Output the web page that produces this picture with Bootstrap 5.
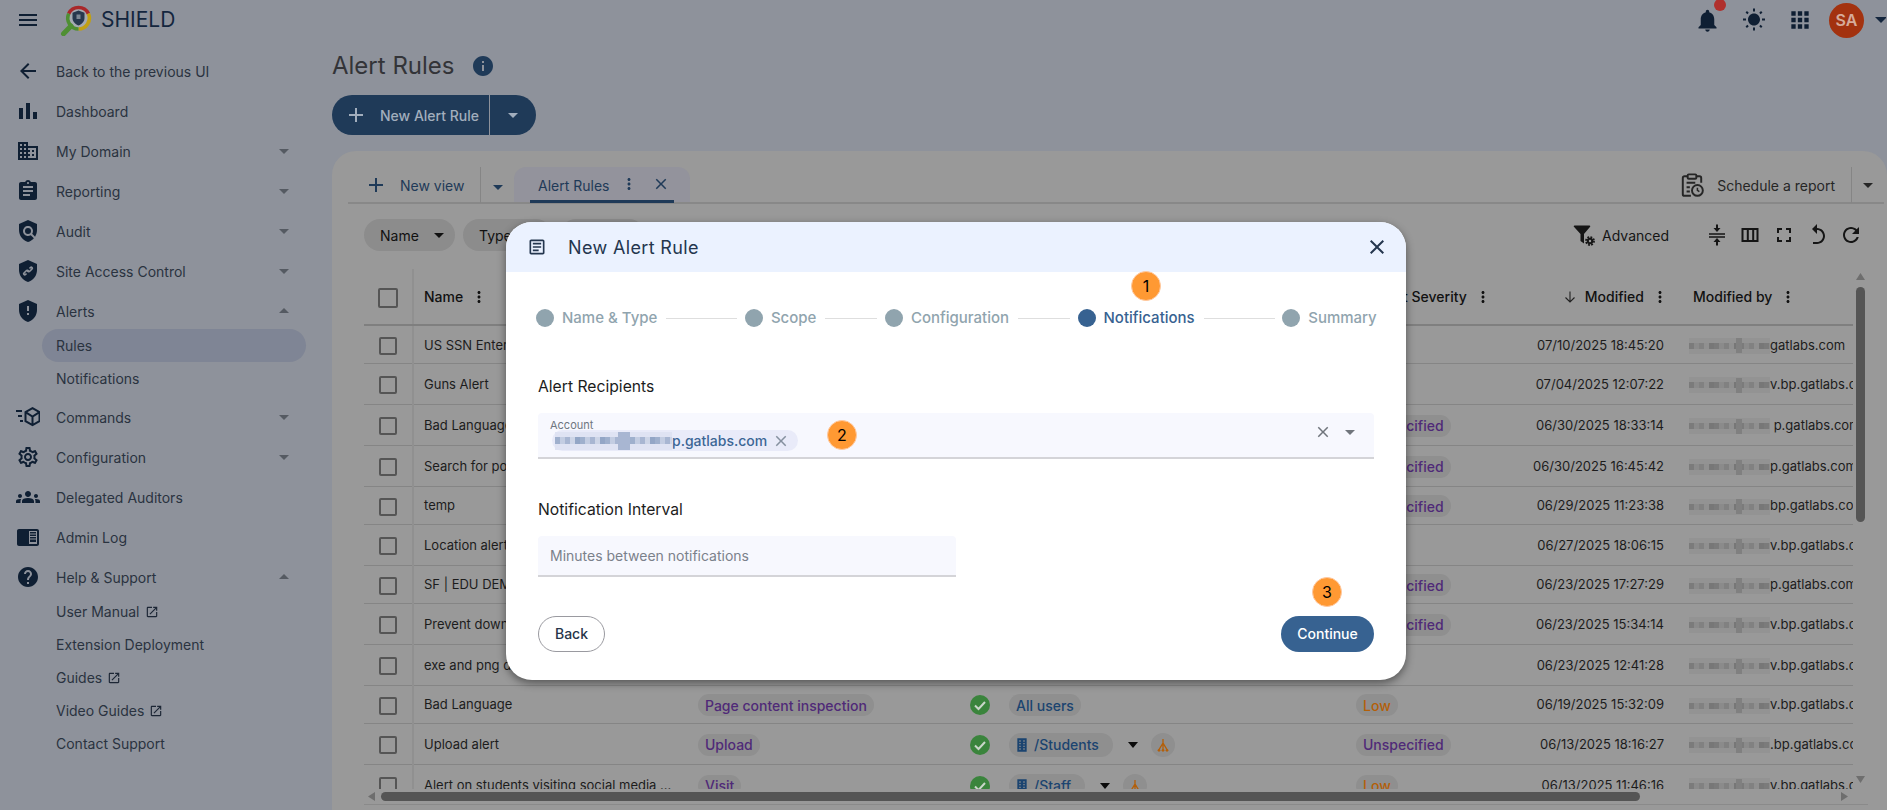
<!DOCTYPE html>
<html lang="en">
<head>
<meta charset="utf-8">
<title>SHIELD - Alert Rules</title>
<link href="https://cdn.jsdelivr.net/npm/bootstrap@5.3.0/dist/css/bootstrap.min.css" rel="stylesheet">
<style>
html,body{height:810px;overflow:hidden}
body{background:#8e929b;font-family:Inter,"Liberation Sans",sans-serif;font-size:14px;color:#2a3340;position:relative}
svg{display:block;flex:none;fill:currentColor}
.topbar{height:48px;padding-bottom:8px}
.burger{width:24px;height:24px;margin-left:16px;color:#0f1f33}
.logo-mark{margin-left:20px}
.brand-name{font-size:21px;margin-left:9px;color:#14263e}
.topicons{color:#0f1f33}
.bell-wrap{position:relative;margin-right:21px}
.red-dot{position:absolute;top:-8px;right:-5px;width:12px;height:12px;border-radius:50%;background:#b0302d}
.sun-i{margin-right:21px}
.apps-i{margin-right:16px}
.ava{width:35px;height:35px;border-radius:50%;background:#a3320f;color:#d6ab9a;font-weight:600;font-size:16px}
.ava-caret{width:13px;overflow:hidden;color:#14263e;margin-left:9px;margin-right:1px}
.sidebar{width:332px;flex:none;padding-top:3px}
.side-link{height:40px;padding-left:16px;color:#2a3340}
.side-ic{width:24px;height:24px;color:#0f1f33;margin-right:16px;flex:none}
.side-caret{margin-left:auto;color:#555a62}
.side-link .side-caret{margin-right:36px}
.sublist{margin-top:-2px;margin-bottom:2px}
.sublist-b{margin-top:-2px;margin-bottom:0}
.sub-link{height:33px;margin-left:42px;width:264px;padding-left:14px;border-radius:17px;color:#2a3340}
.sub-on{background:#7f8595}
.ext-i{width:14px;height:14px;margin-left:5px;color:#1c2635}
.mainarea{flex:1;min-width:0}
.page-head{height:36px}
.page-title{font-size:24px;font-weight:400;margin:0;color:#333438;line-height:36px}
.info-i{width:24px;height:24px;color:#1f3a58;margin-left:17px}
.split-primary{margin-top:11px;width:204px;height:40px;border-radius:20px;background:#1f3a58;color:#a2aebd;font-weight:500;overflow:hidden}
.split-main{width:157px;height:40px;padding-left:12px}
.split-main svg{margin-right:12px}
.split-div{width:1px;height:40px;background:#8e929b;flex:none}
.split-more{flex:1}
.panel-main{background:#999;margin-top:16px;height:659px;border-radius:24px 24px 0 0;padding:16px 3px 0 16px;position:relative}
.tabline{height:37px;border-bottom:2px solid #888}
.newview{color:#1f3a58;width:133px;height:36px;border-right:1px solid #858585;padding-left:16px}
.newview svg{margin-right:12px}
.more-caret{width:33px;color:#1f3a58}
.tab-item{width:176px;height:35px;background:#93939c;border-radius:12px 12px 0 0;padding:0 16px;position:relative;color:#1f3a58}
.tab-inner{width:144px;height:36px;padding:3px 0 0 8px;border-bottom:3px solid #1f3a58;margin-bottom:-1px}
.tab-kebab{margin-left:11px;margin-top:-3px}
.tab-x{margin-left:14px;margin-top:-3px}
.sched{color:#262626;height:36px}
.sched-sep{width:1px;height:36px;background:#858585;margin-left:16px}
.sched-caret{width:32px;color:#262626}
.filterline{height:32px;margin-top:15px;padding-left:16px;padding-right:21px}
.fchip{height:32px;border-radius:16px;background:#8c8c8c;color:#111;padding-left:16px;margin-right:8px}
.fchip-a{width:91px}
.fchip-b{width:89px}
.fchip-c{width:85px}
.fchip svg{margin-left:8px}
.adv{color:#151515;margin-right:26px}
.adv svg{margin-right:6px}
.tool-i{color:#151515;margin-left:9.6px}
.gridbox{position:relative;margin:18px 0 0 16px;width:1504px;height:520px;overflow:hidden}
.gridscroll{width:1489px;height:520px;overflow:hidden}
.table.rules-grid{--bs-table-bg:transparent;--bs-table-color:#1c1c1c;table-layout:fixed;width:1489px;margin:0;border-collapse:collapse}
.rules-grid th,.rules-grid td{padding:0;border-bottom:1px solid #858585;vertical-align:middle;white-space:nowrap;overflow:hidden;font-size:13px}
.rules-grid tbody td{padding-top:2px}
.rules-grid thead th{height:56px;border-bottom:2px solid #7f7f7f;font-weight:500;color:#111;font-size:14px}
.rules-grid .r38 td{height:38px}
.rules-grid .r41 td{height:41px}
.c-chk{width:49px;text-align:center;border-right:2px solid #909090}
.c-name{width:277px;padding-left:10px!important}
.c-type{width:275px;padding-left:8px!important}
.c-act{width:35px;padding-left:5px!important}
.c-scope{width:350px;padding-left:9px!important}
.c-sev{width:180px;padding-left:6px!important}
.c-mod{width:145px;padding-right:11px!important;text-align:right}
.rules-grid thead th.c-mod{padding-right:6px!important}
.c-by{width:178px;padding-left:14px!important}
.th-in{height:20px}
.th-kebab{width:18px;height:18px;margin-left:7px}
.sort-i{margin-right:8px;color:#222}
.chk-box.form-check-input{width:18px;height:18px;margin:0;background-color:transparent;border:2px solid #555;border-radius:2px;vertical-align:middle}
thead .chk-box.form-check-input{width:20px;height:20px}
.tagchip{display:inline-flex;align-items:center;height:22px;border-radius:11px;background:#8f8f8f;padding:0 7px;font-size:14px;font-weight:500}
.t-purple{color:#4f2a78}
.t-blue{color:#1b4470}
.t-orange{color:#b45f08;background:#8f8f8f}
.scopechip{height:24px;border-radius:12px;padding:0 14px 0 5px}
.scopechip svg{margin-right:4px}
.hier{width:24px;height:24px;padding:0;justify-content:center;color:#b45f08;border-radius:12px}
.tri{color:#0b0b0b;margin:0 12px 0 14px}
.stat-ok{width:20px;height:20px}
.pxl{display:inline-block;width:81px;height:16px;vertical-align:middle;background:linear-gradient(#808080,#808080) 62% center/6px 15px no-repeat,repeating-linear-gradient(90deg,#7b7b7b 0 5px,#8b8b8b 5px 10px,#818181 10px 15px,#909090 15px 20px,#777 20px 25px) center/100% 6px no-repeat,#939393;filter:blur(.7px)}
.v-thumb{position:absolute;left:1492px;top:18px;width:9px;height:235px;border-radius:5px;background:#555}
.v-up{position:absolute;left:1492px;top:3px;color:#6e6e6e}
.v-down{position:absolute;left:1492px;top:507px;color:#6e6e6e}
.h-bar{position:relative;height:16px;width:1504px;margin-left:16px;border-bottom:1px solid #8a8a8a}
.h-thumb{position:absolute;left:17px;top:3px;width:1259px;height:9px;border-radius:5px;background:#555}
.h-l{position:absolute;left:3px;top:3px;color:#6e6e6e}
.h-r{position:absolute;left:1477px;top:3px;color:#6e6e6e}
.wizard.modal-content{position:absolute;left:506px;top:222px;width:900px;height:458px;border:0;border-radius:26px;background:#fff;box-shadow:0 3px 8px rgba(0,0,0,.45);overflow:hidden;color:#26354a}
.wizard .modal-header{height:50px;background:#ebf2ff;border:0;padding:0 17px 0 21px;border-radius:0}
.wizard .modal-title{font-size:18px;font-weight:400;color:#24364e;margin-left:21px;letter-spacing:.35px}
.wiz-ic{width:20px;height:20px;color:#24364e}
.wiz-x{width:24px;height:24px;margin-left:auto;color:#24364e}
.wiz-body{padding:34px 32px 0 32px}
.stepper{height:24px;margin-left:-2px;margin-right:-2px;font-size:15px;font-weight:500;color:#90a4ae;white-space:nowrap}
.dot{width:18px;height:18px;border-radius:50%;background:#90a4ae;margin-right:8px;flex:none}
.step-on{color:#376291}
.step-on .dot{background:#376291}
.ln{height:1px;background:#dedede;margin:0 7.5px 0 9px;flex:none}
.ln-l{width:71px}
.ln-s{width:52px}
.sect{font-size:15.7px;height:24px;line-height:24px;color:#1c1c1c;padding-top:1px}
.s1{margin-top:44px}
.s2{margin-top:38px}
.acct{height:46px;margin-top:15px;background:#f7f8fe;border-bottom:2px solid #d4d4d8;border-radius:4px 4px 0 0;position:relative}
.acct-l{position:absolute;left:12px;top:4px;font-size:11px;color:#6f7680}
.acct-chip{position:absolute;left:14px;top:17px;height:21px;width:246px;border-radius:11px;background:#e9ebf9;color:#3c6695;font-weight:500;padding-left:3px}
.pxl-b{display:inline-block;width:117px;height:18px;background:linear-gradient(#a8b6d2,#a8b6d2) 60% center/12px 18px no-repeat,repeating-linear-gradient(90deg,#9fb0cd 0 5px,#c3cde2 5px 10px,#a8b6d2 10px 15px,#cdd5e7 15px 20px,#93a6c6 20px 25px) center/100% 7px no-repeat,#dfe3f3;filter:blur(.7px);flex:none}
.acct-x{color:#85909f;margin-left:5px}
.acct-ctl{position:absolute;right:12px;top:7px;color:#70757c}
.acct-ctl svg+svg{margin-left:6px}
.mins{display:block;width:418px;height:41px;margin-top:15px;background:#f7f8fe;border:0;border-bottom:2px solid #d4d4d8;border-radius:4px 4px 0 0;padding:0 12px;font-size:14px;color:#333}
.mins.form-control{background:#f7f8fe;font-family:inherit}
.mins::placeholder{color:#7b818b}
.wiz-foot{margin-top:39px}
.btn.wiz-back{width:67px;height:36px;border:1px solid #9a9aa0;color:#26354a;font-size:14px;font-weight:500;padding:0 0 2px;background:#fff}
.btn.wiz-next{width:93px;height:36px;background:#376291;color:#fff;font-size:14px;font-weight:500;border:0;padding:0 0 2px}
.num-b{position:absolute;width:30px;height:30px;border-radius:50%;background:#ff9933;border:1px solid #ffc9a0;color:#000;font-size:16px}
.n1{left:625px;top:49px}
.n2{left:321px;top:198px}
.n3{left:806px;top:355px}
</style>
</head>
<body>

<header class="topbar d-flex align-items-center">
  <svg class="burger" viewBox="0 0 24 24"><path d="M3 18h18v-2H3v2zm0-5h18v-2H3v2zm0-7v2h18V6H3z"/></svg>
  <svg class="logo-mark" width="32" height="32" viewBox="0 0 32 32">
    <circle cx="18.5" cy="14" r="10.500" fill="#a5aab2"/>
    <path d="M8.700 9.600A11 11 0 0 1 28.400 9.600" fill="none" stroke="#a9282a" stroke-width="3.600"/>
    <path d="M28.400 9.600A11 11 0 0 1 18.500 25" fill="none" stroke="#c2a012" stroke-width="3.600"/>
    <path d="M18.500 25A11 11 0 0 1 8.700 9.600" fill="none" stroke="#4f8f33" stroke-width="3.600"/>
    <path d="M11 22L3.500 29.800" fill="none" stroke="#4f8f33" stroke-width="5" stroke-linecap="round"/>
    <path d="M18.500 6.500l6 2.200v5c0 3.800-2.600 6.600-6 7.800-3.400-1.200-6-4-6-7.800v-5z" fill="#27384e"/>
    <path d="M16.500 10.500h4V15h-4z" fill="#7c8794"/>
  </svg>
  <span class="brand-name">SHIELD</span>
  <div class="topicons ms-auto d-flex align-items-center">
    <div class="bell-wrap"><svg width="27" height="27" viewBox="0 0 24 24"><path d="M12 22c1.100 0 2-.9 2-2h-4c0 1.100.89 2 2 2zm6-6v-5c0-3.070-1.640-5.640-4.500-6.320V4c0-.83-.67-1.500-1.500-1.500s-1.500.67-1.500 1.500v.68C7.630 5.360 6 7.920 6 11v5l-2 2v1h16v-1l-2-2z"/></svg><span class="red-dot"></span></div>
    <svg class="sun-i" width="24" height="24" viewBox="0 0 24 24"><path d="M6.760 4.840l-1.800-1.790-1.410 1.410 1.790 1.790 1.420-1.410zM4 10.500H1v2h3v-2zm9-9.950h-2V3.500h2V.55zm7.450 3.910l-1.410-1.410-1.790 1.790 1.410 1.410 1.790-1.790zm-3.210 13.700l1.790 1.800 1.410-1.410-1.800-1.790-1.400 1.400zM20 10.500v2h3v-2h-3zm-8-5c-3.310 0-6 2.690-6 6s2.690 6 6 6 6-2.690 6-6-2.690-6-6-6zm-1 16.950h2V19.500h-2v2.950zm-7.450-3.910l1.410 1.410 1.790-1.800-1.410-1.410-1.790 1.800z"/></svg>
    <svg class="apps-i" width="26" height="26" viewBox="0 0 24 24"><path d="M4 8h4V4H4v4zm6 12h4v-4h-4v4zm-6 0h4v-4H4v4zm0-6h4v-4H4v4zm6 0h4v-4h-4v4zm6-10v4h4V4h-4zm-6 4h4V4h-4v4zm6 6h4v-4h-4v4zm0 6h4v-4h-4v4z"/></svg>
    <div class="ava d-flex align-items-center justify-content-center">SA</div>
    <div class="ava-caret"><svg width="24" height="24" viewBox="0 0 24 24"><path d="M2 9l6 6 6-6z"/></svg></div>
  </div>
</header>

<div class="d-flex">
  <nav class="sidebar nav flex-column flex-nowrap">
    <a class="side-link text-decoration-none d-flex align-items-center"><svg class="side-ic" viewBox="0 0 24 24"><path d="M20 11H7.830l5.590-5.590L12 4l-8 8 8 8 1.410-1.410L7.830 13H20v-2z"/></svg>Back to the previous UI</a>
    <a class="side-link text-decoration-none d-flex align-items-center"><svg class="side-ic" viewBox="0 0 24 24"><path d="M3 9h4v11H3zm14 4h4v7h-4zM10 4h4v16h-4z"/></svg>Dashboard</a>
    <a class="side-link text-decoration-none d-flex align-items-center"><svg class="side-ic" viewBox="0 0 24 24"><path d="M12 7V3H2v18h20V7H12zM6 19H4v-2h2v2zm0-4H4v-2h2v2zm0-4H4V9h2v2zm0-4H4V5h2v2zm4 12H8v-2h2v2zm0-4H8v-2h2v2zm0-4H8V9h2v2zm0-4H8V5h2v2zm10 12h-8v-2h2v-2h-2v-2h2v-2h-2V9h8v10zm-2-8h-2v2h2v-2zm0 4h-2v2h2v-2z"/></svg>My Domain<svg class="side-caret" width="24" height="24" viewBox="0 0 24 24"><path d="M7 10l5 5 5-5z"/></svg></a>
    <a class="side-link text-decoration-none d-flex align-items-center"><svg class="side-ic" viewBox="0 0 24 24"><path d="M19 3h-4.180C14.400 1.840 13.300 1 12 1c-1.300 0-2.400.84-2.820 2H5c-1.100 0-2 .9-2 2v14c0 1.100.9 2 2 2h14c1.100 0 2-.9 2-2V5c0-1.100-.9-2-2-2zm-7 0c.55 0 1 .45 1 1s-.45 1-1 1-1-.45-1-1 .45-1 1-1zm2 14H7v-2h7v2zm3-4H7v-2h10v2zm0-4H7V7h10v2z"/></svg>Reporting<svg class="side-caret" width="24" height="24" viewBox="0 0 24 24"><path d="M7 10l5 5 5-5z"/></svg></a>
    <a class="side-link text-decoration-none d-flex align-items-center"><svg class="side-ic" viewBox="0 0 24 24"><path d="M21 5l-9-4-9 4v6c0 5.550 3.840 10.740 9 12 2.300-.56 4.330-1.900 5.880-3.710l-3.120-3.120c-1.940 1.290-4.580 1.070-6.290-.64-1.950-1.950-1.950-5.120 0-7.070 1.950-1.950 5.120-1.950 7.070 0 1.710 1.710 1.920 4.350.64 6.290l2.900 2.900C20.290 15.690 21 13.380 21 11V5z"/><circle cx="12" cy="12" r="3"/></svg>Audit<svg class="side-caret" width="24" height="24" viewBox="0 0 24 24"><path d="M7 10l5 5 5-5z"/></svg></a>
    <a class="side-link text-decoration-none d-flex align-items-center"><svg class="side-ic" viewBox="0 0 24 24"><path d="M12 1L3 5v6c0 5.550 3.840 10.740 9 12 5.160-1.260 9-6.450 9-12V5l-9-4z"/><path d="M10.500 14.500l-1 1c-1 1-2.500-.5-1.500-1.500l2-2c1-1 2.300-.6 2.600.2M13.500 9.500l1-1c1-1 2.500.5 1.500 1.500l-2 2c-1 1-2.300.6-2.600-.2" fill="none" stroke="#8e929b" stroke-width="1.700"/></svg>Site Access Control<svg class="side-caret" width="24" height="24" viewBox="0 0 24 24"><path d="M7 10l5 5 5-5z"/></svg></a>
    <a class="side-link text-decoration-none d-flex align-items-center"><svg class="side-ic" viewBox="0 0 24 24"><path d="M12 1L3 5v6c0 5.550 3.840 10.740 9 12 5.160-1.260 9-6.450 9-12V5l-9-4z M13 16h-2v-2h2V16z M13 12h-2V7h2V12z" fill-rule="evenodd"/></svg>Alerts<svg class="side-caret" width="24" height="24" viewBox="0 0 24 24"><path d="M7 14l5-5 5 5z"/></svg></a>
    <div class="sublist">
      <a class="sub-link text-decoration-none sub-on d-flex align-items-center">Rules</a>
      <a class="sub-link text-decoration-none d-flex align-items-center">Notifications</a>
    </div>
    <a class="side-link text-decoration-none d-flex align-items-center"><svg class="side-ic" viewBox="0 0 24 24" fill="none"><path d="M0 6h6M2 11h4M4 16h3" fill="none" stroke="currentColor" stroke-width="2"/><path d="M16.500 3.200l7 4v9l-7 4-7-4v-9zM9.500 7.200l7 4.300 7-4.300M16.500 11.500v9" fill="none" stroke="currentColor" stroke-width="2"/></svg>Commands<svg class="side-caret" width="24" height="24" viewBox="0 0 24 24"><path d="M7 10l5 5 5-5z"/></svg></a>
    <a class="side-link text-decoration-none d-flex align-items-center"><svg class="side-ic" viewBox="0 0 24 24"><path d="M19.430 12.980c.04-.32.07-.64.07-.98 0-.34-.03-.66-.07-.98l2.110-1.650c.19-.15.24-.42.12-.64l-2-3.460c-.09-.16-.26-.25-.44-.25-.06 0-.12.01-.17.03l-2.490 1c-.52-.4-1.080-.73-1.690-.98l-.38-2.650C14.460 2.180 14.250 2 14 2h-4c-.25 0-.46.18-.49.42l-.38 2.650c-.61.25-1.170.59-1.690.98l-2.490-1c-.06-.02-.12-.03-.18-.03-.17 0-.34.09-.43.25l-2 3.460c-.13.22-.07.49.12.64l2.110 1.650c-.04.32-.07.65-.07.98 0 .33.03.66.07.98l-2.110 1.650c-.19.15-.24.42-.12.64l2 3.460c.09.16.26.25.44.25.06 0 .12-.01.17-.03l2.490-1c.52.4 1.080.73 1.690.98l.38 2.650c.03.24.24.42.49.42h4c.25 0 .46-.18.49-.42l.38-2.650c.61-.25 1.170-.59 1.690-.98l2.490 1c.06.02.12.03.18.03.17 0 .34-.09.43-.25l2-3.460c.12-.22.07-.49-.12-.64l-2.110-1.650zm-1.980-1.710c.04.31.05.52.05.73 0 .21-.02.43-.05.73l-.14 1.130.89.7 1.080.84-.7 1.210-1.270-.51-1.040-.42-.9.68c-.43.32-.84.56-1.250.73l-1.060.43-.16 1.130-.2 1.350h-1.400l-.19-1.350-.16-1.130-1.060-.43c-.43-.18-.83-.41-1.230-.71l-.91-.7-1.060.43-1.270.51-.7-1.210 1.080-.84.89-.7-.14-1.130c-.03-.31-.05-.54-.05-.74s.02-.43.05-.73l.14-1.130-.89-.7-1.080-.84.7-1.210 1.270.51 1.040.42.9-.68c.43-.32.84-.56 1.250-.73l1.060-.43.16-1.130.2-1.350h1.390l.19 1.350.16 1.130 1.060.43c.43.18.83.41 1.230.71l.91.7 1.060-.43 1.270-.51.7 1.210-1.070.85-.89.7.14 1.130zM12 8c-2.210 0-4 1.790-4 4s1.790 4 4 4 4-1.790 4-4-1.790-4-4-4zm0 6c-1.100 0-2-.9-2-2s.9-2 2-2 2 .9 2 2-.9 2-2 2z"/></svg>Configuration<svg class="side-caret" width="24" height="24" viewBox="0 0 24 24"><path d="M7 10l5 5 5-5z"/></svg></a>
    <a class="side-link text-decoration-none d-flex align-items-center"><svg class="side-ic" viewBox="0 0 24 24"><path d="M4 13c1.100 0 2-.9 2-2s-.9-2-2-2-2 .9-2 2 .9 2 2 2zm1.130 1.100c-.37-.06-.74-.1-1.130-.1-.99 0-1.930.21-2.780.58C.48 14.900 0 15.620 0 16.430V18h4.500v-1.610c0-.83.23-1.610.63-2.290zM20 13c1.100 0 2-.9 2-2s-.9-2-2-2-2 .9-2 2 .9 2 2 2zm4 3.430c0-.81-.48-1.530-1.220-1.850-.85-.37-1.790-.58-2.780-.58-.39 0-.76.04-1.130.1.4.68.63 1.460.63 2.290V18H24v-1.570zm-7.760-2.650c-1.170-.52-2.610-.9-4.240-.9-1.630 0-3.070.39-4.240.9C6.680 14.130 6 15.210 6 16.390V18h12v-1.610c0-1.180-.68-2.260-1.760-2.610zM12 12c1.660 0 3-1.340 3-3s-1.340-3-3-3-3 1.340-3 3 1.340 3 3 3z"/></svg>Delegated Auditors</a>
    <a class="side-link text-decoration-none d-flex align-items-center"><svg class="side-ic" viewBox="0 0 24 24"><path fill-rule="evenodd" d="M21 4H3c-1.100 0-2 .9-2 2v13c0 1.100.9 2 2 2h18c1.100 0 2-.9 2-2V6c0-1.100-.9-2-2-2zm0 15h-8V6h8v13zm-7-9.500h6V11h-6zm0 2.500h6v1.500h-6zm0-5h6V8.500h-6zm0 7.500h6V17h-6z"/></svg>Admin Log</a>
    <a class="side-link text-decoration-none d-flex align-items-center"><svg class="side-ic" viewBox="0 0 24 24"><path d="M12 2C6.480 2 2 6.480 2 12s4.480 10 10 10 10-4.480 10-10S17.520 2 12 2zm1 17h-2v-2h2v2zm2.070-7.750l-.9.92C13.450 12.900 13 13.500 13 15h-2v-.5c0-1.100.45-2.100 1.170-2.830l1.240-1.260c.37-.36.59-.86.59-1.410 0-1.100-.9-2-2-2s-2 .9-2 2H8c0-2.210 1.790-4 4-4s4 1.790 4 4c0 .88-.36 1.680-.93 2.250z"/></svg>Help &amp; Support<svg class="side-caret" width="24" height="24" viewBox="0 0 24 24"><path d="M7 14l5-5 5 5z"/></svg></a>
    <div class="sublist-b">
      <a class="sub-link text-decoration-none d-flex align-items-center">User Manual<svg class="ext-i" viewBox="0 0 24 24"><path d="M19 19H5V5h7V3H5c-1.110 0-2 .9-2 2v14c0 1.100.89 2 2 2h14c1.100 0 2-.9 2-2v-7h-2v7zM14 3v2h3.590l-9.830 9.830 1.410 1.410L19 6.410V10h2V3h-7z"/></svg></a>
      <a class="sub-link text-decoration-none d-flex align-items-center">Extension Deployment</a>
      <a class="sub-link text-decoration-none d-flex align-items-center">Guides<svg class="ext-i" viewBox="0 0 24 24"><path d="M19 19H5V5h7V3H5c-1.110 0-2 .9-2 2v14c0 1.100.89 2 2 2h14c1.100 0 2-.9 2-2v-7h-2v7zM14 3v2h3.590l-9.830 9.830 1.410 1.410L19 6.410V10h2V3h-7z"/></svg></a>
      <a class="sub-link text-decoration-none d-flex align-items-center">Video Guides<svg class="ext-i" viewBox="0 0 24 24"><path d="M19 19H5V5h7V3H5c-1.110 0-2 .9-2 2v14c0 1.100.89 2 2 2h14c1.100 0 2-.9 2-2v-7h-2v7zM14 3v2h3.590l-9.830 9.830 1.410 1.410L19 6.410V10h2V3h-7z"/></svg></a>
      <a class="sub-link text-decoration-none d-flex align-items-center">Contact Support</a>
    </div>
  </nav>

  <main class="mainarea">
    <div class="page-head d-flex align-items-center">
      <h1 class="page-title">Alert Rules</h1>
      <svg class="info-i" viewBox="0 0 24 24"><path d="M12 2C6.480 2 2 6.480 2 12s4.480 10 10 10 10-4.480 10-10S17.520 2 12 2zm1 15h-2v-6h2v6zm0-8h-2V7h2v2z"/></svg>
    </div>
    <div class="split-primary d-flex align-items-center">
      <div class="split-main d-flex align-items-center"><svg width="24" height="24" viewBox="0 0 24 24"><path d="M19 13h-6v6h-2v-6H5v-2h6V5h2v6h6v2z"/></svg>New Alert Rule</div>
      <span class="split-div"></span>
      <div class="split-more d-flex justify-content-center"><svg width="24" height="24" viewBox="0 0 24 24"><path d="M7 10l5 5 5-5z"/></svg></div>
    </div>

    <section class="panel-main">
      <div class="tabline d-flex align-items-start">
        <div class="newview d-flex align-items-center"><svg width="24" height="24" viewBox="0 0 24 24"><path d="M19 13h-6v6h-2v-6H5v-2h6V5h2v6h6v2z"/></svg>New view</div>
        <div class="more-caret d-flex justify-content-center pt-1 mt-1"><svg width="24" height="24" viewBox="0 0 24 24"><path d="M7 10l5 5 5-5z"/></svg></div>
        <div class="tab-item">
          <div class="tab-inner d-flex align-items-center">Alert Rules
            <svg class="tab-kebab" width="18" height="18" viewBox="0 0 24 24"><path d="M12 8c1.100 0 2-.9 2-2s-.9-2-2-2-2 .9-2 2 .9 2 2 2zm0 2c-1.100 0-2 .9-2 2s.9 2 2 2 2-.9 2-2-.9-2-2-2zm0 6c-1.100 0-2 .9-2 2s.9 2 2 2 2-.9 2-2-.9-2-2-2z"/></svg>
            <svg class="tab-x" width="18" height="18" viewBox="0 0 24 24"><path d="M19 6.410L17.590 5 12 10.590 6.410 5 5 6.410 10.590 12 5 17.590 6.410 19 12 13.410 17.590 19 19 17.590 13.410 12z"/></svg>
          </div>
        </div>
        <div class="sched ms-auto d-flex align-items-center">
          <svg class="me-2" width="26" height="26" viewBox="0 0 24 24" fill="none"><path d="M8 4H5a1.500 1.500 0 0 0-1.500 1.500v15A1.500 1.500 0 0 0 5 22h6M16 4h3a1.500 1.500 0 0 1 1.500 1.500V10" fill="none" stroke="currentColor" stroke-width="1.800"/><rect x="8" y="2.200" width="8" height="4" rx="1" fill="none" stroke="currentColor" stroke-width="1.800"/><path d="M7 10h8M7 14h3M7 18h3" fill="none" stroke="currentColor" stroke-width="1.800"/><circle cx="17" cy="17" r="5" fill="none" stroke="currentColor" stroke-width="1.800"/><path d="M17 14.500V17l1.800 1.200" fill="none" stroke="currentColor" stroke-width="1.400"/></svg>
          <span class="ms-1">Schedule a report</span>
          <span class="sched-sep"></span>
          <div class="sched-caret d-flex justify-content-center"><svg width="24" height="24" viewBox="0 0 24 24"><path d="M7 10l5 5 5-5z"/></svg></div>
        </div>
      </div>

      <div class="filterline d-flex align-items-center">
        <div class="fchip fchip-a d-flex align-items-center">Name<svg width="24" height="24" viewBox="0 0 24 24"><path d="M7 10l5 5 5-5z"/></svg></div>
        <div class="fchip fchip-b d-flex align-items-center">Type</div>
        <div class="fchip fchip-c d-flex align-items-center"></div>
        <div class="adv ms-auto d-flex align-items-center">
          <svg width="24" height="24" viewBox="0 0 24 24"><path d="M2.500 2.500h15c.7 0 1 .8.6 1.300L12 11v9.500l-3.500-2.500v-7L1.900 3.800c-.4-.5-.1-1.300.6-1.300z"/><circle cx="18" cy="18" r="3.200"/><circle cx="18" cy="18" r="4" fill="none" stroke="currentColor" stroke-width="1.800" stroke-dasharray="1.800 1.340"/><circle cx="18" cy="18" r="1.200" fill="#999"/></svg>
          Advanced
        </div>
        <svg class="tool-i" width="24" height="24" viewBox="0 0 24 24"><path d="M4 10.200h16v1.500H4zM4 13.300h16v1.500H4zM13 5h2.500L12 9 8.500 5H11V1.500h2zM11 19H8.500L12 15l3.500 4H13v3.500h-2z"/></svg>
        <svg class="tool-i" width="24" height="24" viewBox="0 0 24 24"><path fill-rule="evenodd" d="M3.500 5v14h17V5zM5.500 7h3.300v10H5.500zM10.800 7h3.400v10h-3.400zM16.200 7h2.300v10h-2.300z"/></svg>
        <svg class="tool-i" width="24" height="24" viewBox="0 0 24 24"><path d="M7 14H5v5h5v-2H7v-3zm-2-4h2V7h3V5H5v5zm12 7h-3v2h5v-5h-2v3zM14 5v2h3v3h2V5h-5z"/></svg>
        <svg class="tool-i" width="24" height="24" viewBox="0 0 24 24"><path d="M12 5V1L7 6l5 5V7c3.310 0 6 2.690 6 6s-2.690 6-6 6H8v2h4c4.420 0 8-3.580 8-8s-3.580-8-8-8z"/></svg>
        <svg class="tool-i" width="24" height="24" viewBox="0 0 24 24"><path d="M17.650 6.350C16.200 4.900 14.210 4 12 4c-4.420 0-7.990 3.580-7.990 8s3.570 8 7.990 8c3.730 0 6.840-2.550 7.730-6h-2.080c-.82 2.330-3.040 4-5.650 4-3.310 0-6-2.690-6-6s2.690-6 6-6c1.660 0 3.140.69 4.220 1.780L13 11h7V4l-2.350 2.350z"/></svg>
      </div>

      <div class="gridbox">
        <div class="gridscroll">
          <table class="table rules-grid">
            <colgroup><col class="c-chk"><col class="c-name"><col class="c-type"><col class="c-act"><col class="c-scope"><col class="c-sev"><col class="c-mod"><col class="c-by"></colgroup>
            <thead>
              <tr>
                <th class="c-chk"><input class="form-check-input chk-box" type="checkbox"></th>
                <th class="c-name"><div class="th-in d-flex align-items-center">Name<svg class="th-kebab" viewBox="0 0 24 24"><path d="M12 8c1.100 0 2-.9 2-2s-.9-2-2-2-2 .9-2 2 .9 2 2 2zm0 2c-1.100 0-2 .9-2 2s.9 2 2 2 2-.9 2-2-.9-2-2-2zm0 6c-1.100 0-2 .9-2 2s.9 2 2 2 2-.9 2-2-.9-2-2-2z"/></svg></div></th>
                <th class="c-type"></th><th class="c-act"></th><th class="c-scope"></th>
                <th class="c-sev"><div class="th-in d-flex align-items-center ms-3">&nbsp;Alert Severity<svg class="th-kebab" viewBox="0 0 24 24"><path d="M12 8c1.100 0 2-.9 2-2s-.9-2-2-2-2 .9-2 2 .9 2 2 2zm0 2c-1.100 0-2 .9-2 2s.9 2 2 2 2-.9 2-2-.9-2-2-2zm0 6c-1.100 0-2 .9-2 2s.9 2 2 2 2-.9 2-2-.9-2-2-2z"/></svg></div></th>
                <th class="c-mod"><div class="th-in d-flex align-items-center justify-content-end"><svg class="sort-i" width="14" height="14" viewBox="0 0 14 14" fill="none"><path d="M7 1.500v10.500M2.500 7.500L7 12l4.500-4.500" fill="none" stroke="currentColor" stroke-width="1.100"/></svg><span>Modified</span><svg class="th-kebab" viewBox="0 0 24 24"><path d="M12 8c1.100 0 2-.9 2-2s-.9-2-2-2-2 .9-2 2 .9 2 2 2zm0 2c-1.100 0-2 .9-2 2s.9 2 2 2 2-.9 2-2-.9-2-2-2zm0 6c-1.100 0-2 .9-2 2s.9 2 2 2 2-.9 2-2-.9-2-2-2z"/></svg></div></th>
                <th class="c-by"><div class="th-in d-flex align-items-center ms-1">Modified by<svg class="th-kebab" viewBox="0 0 24 24"><path d="M12 8c1.100 0 2-.9 2-2s-.9-2-2-2-2 .9-2 2 .9 2 2 2zm0 2c-1.100 0-2 .9-2 2s.9 2 2 2 2-.9 2-2-.9-2-2-2zm0 6c-1.100 0-2 .9-2 2s.9 2 2 2 2-.9 2-2-.9-2-2-2z"/></svg></div></th>
              </tr>
            </thead>
            <tbody>
              <tr class="r38"><td class="c-chk"><input class="form-check-input chk-box" type="checkbox"></td><td class="c-name">US SSN Enter</td><td></td><td></td><td></td><td class="c-sev"></td><td class="c-mod">07/10/2025 18:45:20</td><td class="c-by"><span class="pxl"></span>gatlabs.com</td></tr>
              <tr class="r41"><td class="c-chk"><input class="form-check-input chk-box" type="checkbox"></td><td class="c-name">Guns Alert</td><td></td><td></td><td></td><td class="c-sev"></td><td class="c-mod">07/04/2025 12:07:22</td><td class="c-by"><span class="pxl"></span>v.bp.gatlabs.com</td></tr>
              <tr class="r41"><td class="c-chk"><input class="form-check-input chk-box" type="checkbox"></td><td class="c-name">Bad Language</td><td></td><td></td><td></td><td class="c-sev"><span class="tagchip t-purple">Unspecified</span></td><td class="c-mod">06/30/2025 18:33:14</td><td class="c-by"><span class="pxl"></span>&nbsp;p.gatlabs.com</td></tr>
              <tr class="r41"><td class="c-chk"><input class="form-check-input chk-box" type="checkbox"></td><td class="c-name">Search for po</td><td></td><td></td><td></td><td class="c-sev"><span class="tagchip t-purple">Unspecified</span></td><td class="c-mod">06/30/2025 16:45:42</td><td class="c-by"><span class="pxl"></span>p.gatlabs.com</td></tr>
              <tr class="r38"><td class="c-chk"><input class="form-check-input chk-box" type="checkbox"></td><td class="c-name">temp</td><td></td><td></td><td></td><td class="c-sev"><span class="tagchip t-purple">Unspecified</span></td><td class="c-mod">06/29/2025 11:23:38</td><td class="c-by"><span class="pxl"></span>bp.gatlabs.com</td></tr>
              <tr class="r41"><td class="c-chk"><input class="form-check-input chk-box" type="checkbox"></td><td class="c-name">Location alert</td><td></td><td></td><td></td><td class="c-sev"></td><td class="c-mod">06/27/2025 18:06:15</td><td class="c-by"><span class="pxl"></span>v.bp.gatlabs.com</td></tr>
              <tr class="r38"><td class="c-chk"><input class="form-check-input chk-box" type="checkbox"></td><td class="c-name">SF | EDU DEM</td><td></td><td></td><td></td><td class="c-sev"><span class="tagchip t-purple">Unspecified</span></td><td class="c-mod">06/23/2025 17:27:29</td><td class="c-by"><span class="pxl"></span>p.gatlabs.com</td></tr>
              <tr class="r41"><td class="c-chk"><input class="form-check-input chk-box" type="checkbox"></td><td class="c-name">Prevent down</td><td></td><td></td><td></td><td class="c-sev"><span class="tagchip t-purple">Unspecified</span></td><td class="c-mod">06/23/2025 15:34:14</td><td class="c-by"><span class="pxl"></span>v.bp.gatlabs.com</td></tr>
              <tr class="r41"><td class="c-chk"><input class="form-check-input chk-box" type="checkbox"></td><td class="c-name">exe and png d</td><td></td><td></td><td></td><td class="c-sev"></td><td class="c-mod">06/23/2025 12:41:28</td><td class="c-by"><span class="pxl"></span>v.bp.gatlabs.com</td></tr>
              <tr class="r38"><td class="c-chk"><input class="form-check-input chk-box" type="checkbox"></td><td class="c-name">Bad Language</td><td class="c-type"><span class="tagchip t-purple">Page content inspection</span></td><td class="c-act"><svg class="stat-ok" viewBox="0 0 20 20"><circle cx="10" cy="10" r="10" fill="#3a843c"/><path d="M5 10.500l3.500 3.500L15 7" fill="none" stroke="#c9d6c9" stroke-width="2"/></svg></td><td class="c-scope"><span class="tagchip t-blue">All users</span></td><td class="c-sev"><span class="tagchip t-orange">Low</span></td><td class="c-mod">06/19/2025 15:32:09</td><td class="c-by"><span class="pxl"></span>v.bp.gatlabs.com</td></tr>
              <tr class="r41"><td class="c-chk"><input class="form-check-input chk-box" type="checkbox"></td><td class="c-name">Upload alert</td><td class="c-type"><span class="tagchip t-purple">Upload</span></td><td class="c-act"><svg class="stat-ok" viewBox="0 0 20 20"><circle cx="10" cy="10" r="10" fill="#3a843c"/><path d="M5 10.500l3.500 3.500L15 7" fill="none" stroke="#c9d6c9" stroke-width="2"/></svg></td><td class="c-scope"><div class="d-flex align-items-center"><span class="tagchip scopechip t-blue"><svg width="16" height="16" viewBox="0 0 24 24"><path fill-rule="evenodd" d="M5 2h14v20H5zM8 5v2h2V5zM14 5v2h2V5zM8 9v2h2V9zM14 9v2h2V9zM8 13v2h2v-2zM14 13v2h2v-2zM8 17v2h2v-2zM14 17v2h2v-2z"/></svg>/Students</span><svg class="tri" width="12" height="12" viewBox="0 0 12 12"><path d="M1 3l5 6 5-6z"/></svg><span class="tagchip hier"><svg width="16" height="16" viewBox="0 0 24 24" fill="none"><path d="M12 3v6M12 9l-6 10M12 9v10M12 9l6 10" fill="none" stroke="currentColor" stroke-width="2"/><circle cx="6" cy="20" r="2" fill="currentColor"/><circle cx="12" cy="20" r="2" fill="currentColor"/><circle cx="18" cy="20" r="2" fill="currentColor"/></svg></span></div></td><td class="c-sev"><span class="tagchip t-purple">Unspecified</span></td><td class="c-mod">06/13/2025 18:16:27</td><td class="c-by"><span class="pxl"></span>.bp.gatlabs.com</td></tr>
              <tr class="r41"><td class="c-chk"><input class="form-check-input chk-box" type="checkbox"></td><td class="c-name">Alert on students visiting social media ...</td><td class="c-type"><span class="tagchip t-purple">Visit</span></td><td class="c-act"><svg class="stat-ok" viewBox="0 0 20 20"><circle cx="10" cy="10" r="10" fill="#3a843c"/><path d="M5 10.500l3.500 3.500L15 7" fill="none" stroke="#c9d6c9" stroke-width="2"/></svg></td><td class="c-scope"><div class="d-flex align-items-center"><span class="tagchip scopechip t-blue"><svg width="16" height="16" viewBox="0 0 24 24"><path fill-rule="evenodd" d="M5 2h14v20H5zM8 5v2h2V5zM14 5v2h2V5zM8 9v2h2V9zM14 9v2h2V9zM8 13v2h2v-2zM14 13v2h2v-2zM8 17v2h2v-2zM14 17v2h2v-2z"/></svg>/Staff</span><svg class="tri" width="12" height="12" viewBox="0 0 12 12"><path d="M1 3l5 6 5-6z"/></svg><span class="tagchip hier"><svg width="16" height="16" viewBox="0 0 24 24" fill="none"><path d="M12 3v6M12 9l-6 10M12 9v10M12 9l6 10" fill="none" stroke="currentColor" stroke-width="2"/><circle cx="6" cy="20" r="2" fill="currentColor"/><circle cx="12" cy="20" r="2" fill="currentColor"/><circle cx="18" cy="20" r="2" fill="currentColor"/></svg></span></div></td><td class="c-sev"><span class="tagchip t-orange">Low</span></td><td class="c-mod">06/13/2025 11:46:16</td><td class="c-by"><span class="pxl"></span>v.bp.gatlabs.com</td></tr>
            </tbody>
          </table>
        </div>
        <svg class="v-up" width="9" height="8" viewBox="0 0 9 8"><path d="M0 8l4.500-7L9 8z"/></svg>
        <div class="v-thumb"></div>
        <svg class="v-down" width="9" height="8" viewBox="0 0 9 8"><path d="M0 0l4.500 7L9 0z"/></svg>
      </div>
      <div class="h-bar">
        <svg class="h-l" width="8" height="9" viewBox="0 0 8 9"><path d="M8 0L1 4.500 8 9z"/></svg>
        <div class="h-thumb"></div>
        <svg class="h-r" width="8" height="9" viewBox="0 0 8 9"><path d="M0 0l7 4.500L0 9z"/></svg>
      </div>
    </section>
  </main>
</div>

<div class="wizard modal-content">
  <div class="modal-header">
    <svg class="wiz-ic" viewBox="0 0 24 24"><path d="M19 5v14H5V5h14m0-2H5c-1.100 0-2 .9-2 2v14c0 1.100.9 2 2 2h14c1.100 0 2-.9 2-2V5c0-1.100-.9-2-2-2zM14 17H7v-2h7v2zm3-4H7v-2h10v2zm0-4H7V7h10v2z"/></svg>
    <h5 class="modal-title">New Alert Rule</h5>
    <svg class="wiz-x" viewBox="0 0 24 24"><path d="M19 6.410L17.590 5 12 10.590 6.410 5 5 6.410 10.590 12 5 17.590 6.410 19 12 13.410 17.590 19 19 17.590 13.410 12z"/></svg>
  </div>
  <div class="wiz-body">
    <div class="stepper d-flex align-items-center">
      <span class="dot"></span>Name &amp; Type<span class="ln ln-l"></span>
      <span class="dot"></span>Scope<span class="ln ln-s"></span>
      <span class="dot"></span>Configuration<span class="ln ln-s"></span>
      <span class="step-on d-flex align-items-center"><span class="dot"></span>Notifications</span><span class="ln ln-l"></span>
      <span class="dot"></span>Summary
    </div>
    <div class="sect s1">Alert Recipients</div>
    <div class="acct">
      <span class="acct-l">Account</span>
      <div class="acct-chip d-flex align-items-center"><span class="pxl-b"></span>p.gatlabs.com<svg class="acct-x" width="18" height="18" viewBox="0 0 24 24"><path d="M19 6.410L17.590 5 12 10.590 6.410 5 5 6.410 10.590 12 5 17.590 6.410 19 12 13.410 17.590 19 19 17.590 13.410 12z"/></svg></div>
      <div class="acct-ctl d-flex align-items-center">
        <svg width="18" height="18" viewBox="0 0 24 24"><path d="M19 6.410L17.590 5 12 10.590 6.410 5 5 6.410 10.590 12 5 17.590 6.410 19 12 13.410 17.590 19 19 17.590 13.410 12z"/></svg>
        <svg width="24" height="24" viewBox="0 0 24 24"><path d="M7 10l5 5 5-5z"/></svg>
      </div>
    </div>
    <div class="sect s2">Notification Interval</div>
    <input class="mins form-control" type="text" placeholder="Minutes between notifications">
    <div class="wiz-foot d-flex justify-content-between">
      <button class="btn wiz-back rounded-pill">Back</button>
      <button class="btn wiz-next rounded-pill">Continue</button>
    </div>
  </div>
  <span class="num-b n1 d-flex align-items-center justify-content-center">1</span>
  <span class="num-b n2 d-flex align-items-center justify-content-center">2</span>
  <span class="num-b n3 d-flex align-items-center justify-content-center">3</span>
</div>

<script src="https://cdn.jsdelivr.net/npm/bootstrap@5.3.0/dist/js/bootstrap.bundle.min.js"></script>
</body>
</html>
